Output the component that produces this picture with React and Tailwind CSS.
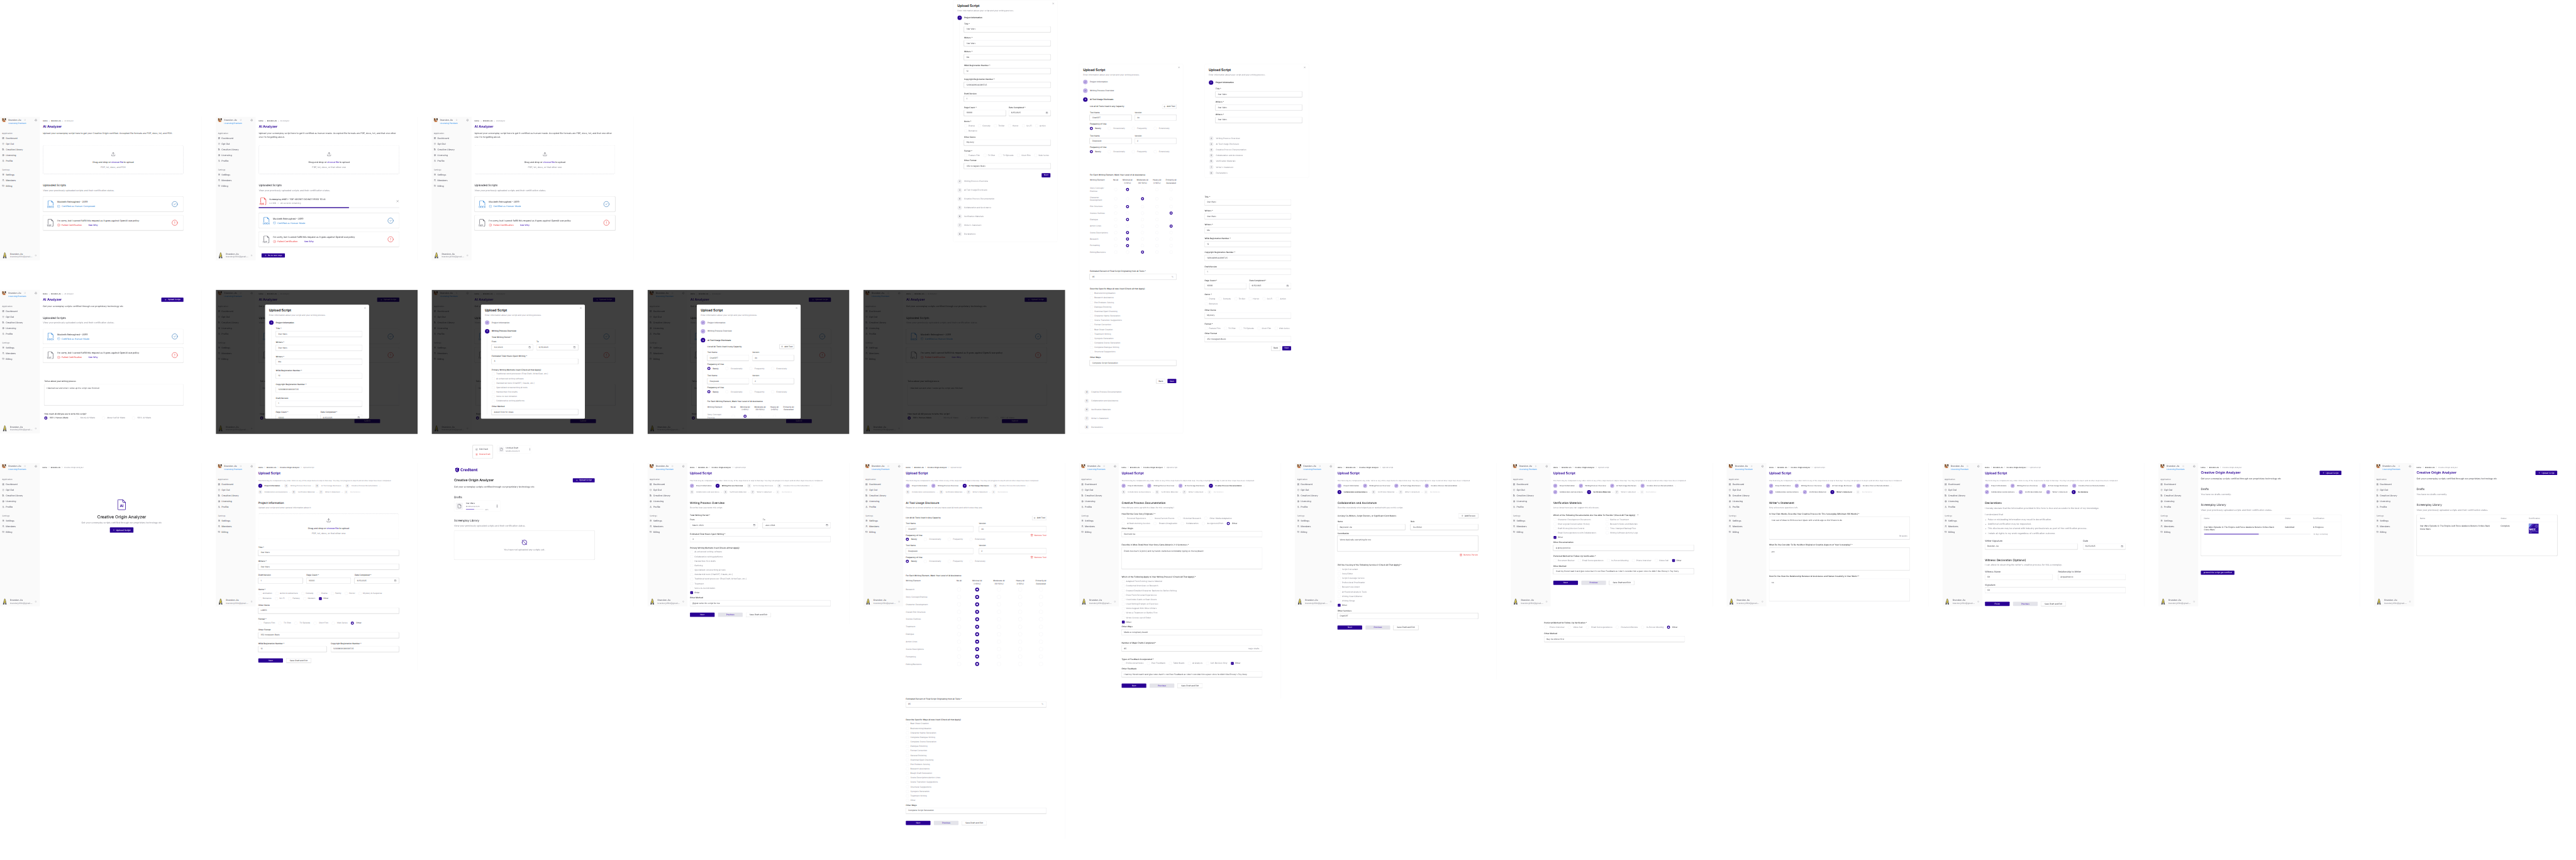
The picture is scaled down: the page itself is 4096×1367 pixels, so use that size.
import React from "react";
import {
  LayoutDashboard, ShieldCheck, LibraryBig, CircleDollarSign, UserPen, Settings, Users, CreditCard,
  Bell, ChevronsUpDown, ChevronRight, Plus, X, Check, Calendar, Trash2, SquarePen, File, EllipsisVertical,
  CircleCheck, CircleAlert, CircleSlash2, Upload, BadgeCheck,
} from "lucide-react";
import { BsFiletypeDocx, BsFiletypePdf, BsFiletypeTxt } from "react-icons/bs";

/* ---------- primitives ---------- */

const Label = ({ children, className = "" }) => (
  <div className={"h-5 text-sm leading-5 font-medium text-[#27272a] whitespace-nowrap " + className}>{children}</div>
);

const Input = ({ value, icon, suffix }) => (
  <div className="mt-2 flex h-10 items-center justify-between rounded-md border border-[#e4e4e7] bg-white px-4 text-sm text-[#3f3f46] shadow-sm">
    <span className="whitespace-nowrap">{value}</span>
    {icon && <Calendar className="size-4 text-[#52525b]" />}
    {suffix && <span className="mr-1 text-[#85858f]">{suffix}</span>}
  </div>
);

const Field = ({ label, value, icon, suffix, className = "", plain }) => (
  <div className={"min-w-0 " + className}>
    <Label className={plain ? "font-normal!" : ""}>{label}</Label>
    <Input value={value} icon={icon} suffix={suffix} />
  </div>
);

const TextArea = ({ value, footer, className }) => (
  <div className={"flex flex-col justify-between rounded-md border border-[#e4e4e7] bg-white px-4 pt-4 pb-2.5 text-sm text-[#3f3f46] shadow-sm " + className}>
    <span>{value}</span>
    {footer && <span className="self-end text-[#85858f]">{footer}</span>}
  </div>
);

const Box = ({ children, on }) => (
  <div className="flex h-6 items-center">
    <span className={"ml-0.5 flex size-5 items-center justify-center rounded " + (on ? "bg-[#2a0094]" : "border border-[#e4e4e7] bg-white")}>
      {on && <Check className="size-3 text-white" strokeWidth={3} />}
    </span>
    <span className={"ml-2.5 text-sm whitespace-nowrap " + (on ? "text-[#3f3f46]" : "text-[#85858f]")}>{children}</span>
  </div>
);

const Dot = ({ on, big }) => (
  <span
    className={
      "block shrink-0 rounded-full bg-white " +
      (big ? "size-7 " : "size-[22px] ") +
      (on ? (big ? "border-8 border-[#2a0094]" : "border-[6px] border-[#2a0094]") : "border border-[#e4e4e7]")
    }
  />
);

const Radio = ({ children, on }) => (
  <div className="flex h-6 items-center gap-4">
    <Dot on={on} />
    <span className={"text-sm whitespace-nowrap " + (on ? "font-medium text-[#3f3f46]" : "text-[#85858f]")}>{children}</span>
  </div>
);

const Boxes = ({ items, className = "" }) => (
  <div className={"flex gap-6 " + className}>
    {items.map((t) => <Box key={t} on={t === "Other"}>{t}</Box>)}
  </div>
);

const Radios = ({ items, on = "Other", className = "gap-6" }) => (
  <div className={"flex " + className}>
    {items.map((t) => <Radio key={t} on={t === on}>{t}</Radio>)}
  </div>
);

const CheckList = ({ items, on, className = "" }) => (
  <div className={className}>
    {items.map((t) => (
      <div key={t} className="flex h-[32.1px] items-center"><Box on={t === on}>{t}</Box></div>
    ))}
  </div>
);

const Btn = ({ children, className = "", kind = "solid", plus }) => (
  <div
    className={
      "flex items-center justify-center gap-2 rounded text-sm whitespace-nowrap " +
      (kind === "solid" ? "bg-[#2a0094] text-white " : kind === "soft" ? "bg-[#e4e4ea] text-[#4a1fb8] " : "border border-[#ededf0] bg-white text-[#3f3f46] shadow ") +
      className
    }
  >
    {plus && <Plus className="size-4" />}
    {children}
  </div>
);

const Actions = ({ first = "Next", prev = true, className }) => (
  <div className={"flex gap-6 " + className}>
    <Btn className="h-[30px] w-44">{first}</Btn>
    {prev && <Btn kind="soft" className="h-[30px] w-44 font-medium">Previous</Btn>}
    <Btn kind="line" className="h-[30px] w-44 font-medium">Save Draft and Exit</Btn>
  </div>
);

/* ---------- avatars and logo ---------- */

const Dog = () => (
  <svg viewBox="0 0 28 28" className="size-[28px] rounded">
    <rect width="28" height="28" fill="#e9d9c6" />
    <path d="M0 0h9l3 9-6 12H0z" fill="#8a5a34" />
    <path d="M19 0h9v18l-7-6z" fill="#3d2d27" />
    <path d="M6 28c0-8 3-14 8-14s9 6 9 14z" fill="#c98a52" />
    <circle cx="10" cy="10" r="2" fill="#1d1716" /><circle cx="18" cy="10" r="2" fill="#1d1716" />
    <ellipse cx="14" cy="15" rx="3" ry="2.2" fill="#1d1716" />
    <path d="M11 20h7l-2 4h-4z" fill="#d8433f" />
  </svg>
);

const Banana = () => (
  <svg viewBox="0 0 30 42" className="h-[42px] w-[30px]">
    <path d="M13 1h4l1 5c5 6 5 16 1 24l-9 1c-2-6 1-9 0-15-1-5 2-10 3-10z" fill="#f5dc2e" stroke="#222" strokeWidth="2" />
    <path d="M13 12h6v5h-6z" fill="#fff" stroke="#222" />
    <path d="M10 20l-6 5 3 5M19 20l6 5-3 5" fill="none" stroke="#333" strokeWidth="2.5" />
    <path d="M4 31h8v10H2v-4zM18 31h8l2 10H18z" fill="#444" />
  </svg>
);

const Shield = () => (
  <svg viewBox="0 0 30 34" className="h-[34px] w-[30px]">
    <path d="M15 0l14 5v12c0 8-6 14-14 17C7 31 1 25 1 17V5z" fill="#2a0094" />
    <path d="M20 11a7 7 0 1 0 0 11" fill="none" stroke="#fff" strokeWidth="3.4" />
  </svg>
);

/* ---------- sidebar ---------- */

const NavItem = ({ icon: Icon, children }) => (
  <div className="flex h-[40.2px] items-center gap-2.5 text-base font-medium text-[#5f5f6b]">
    <Icon className="size-4" />
    {children}
  </div>
);

const Sidebar = () => (
  <div className="flex h-[1024px] w-[284px] shrink-0 flex-col bg-[#fafafa] px-[15px] pt-[9px] pb-[14px]">
    <div className="flex items-start">
      <Dog />
      <div className="ml-4">
        <div className="mt-0.5 flex h-6 items-center text-base font-medium text-[#5f5f6b]">
          Brandon Jia <ChevronsUpDown className="ml-5 size-4 text-[#85858f]" />
        </div>
        <div className="h-5 text-sm leading-5 font-medium text-[#2b8ff0]">Licensing Premium</div>
      </div>
      <Bell className="mt-1.5 mr-1 ml-auto size-[18px] text-[#52525b]" />
    </div>
    <div className="mt-[52px] h-5 text-sm leading-5 text-[#71717a]">Application</div>
    <div className="mt-1.5">
      <NavItem icon={LayoutDashboard}>Dashboard</NavItem>
      <NavItem icon={ShieldCheck}>Opt Out</NavItem>
      <NavItem icon={LibraryBig}>Creative Library</NavItem>
      <NavItem icon={CircleDollarSign}>Licensing</NavItem>
      <NavItem icon={UserPen}>Profile</NavItem>
    </div>
    <div className="mt-[33px] h-5 text-sm leading-5 text-[#71717a]">Settings</div>
    <div className="mt-[5px]">
      <NavItem icon={Settings}>Settings</NavItem>
      <NavItem icon={Users}>Members</NavItem>
      <NavItem icon={CreditCard}>Billing</NavItem>
    </div>
    <div className="mt-auto flex items-center pl-1">
      <Banana />
      <div className="ml-[23px]">
        <div className="h-[21px] text-base leading-[21px] font-medium text-[#5f5f6b]">Brandon Jia</div>
        <div className="h-5 text-sm leading-5 text-[#85858f]">brandonj4564@gmail....</div>
      </div>
      <ChevronsUpDown className="mr-1.5 ml-auto size-4 text-[#71717a]" />
    </div>
  </div>
);

/* ---------- frame shells ---------- */

const Crumbs = ({ items }) => (
  <div className="flex h-4 items-center gap-1.5 text-xs leading-4">
    {items.map((t, i) => (
      <React.Fragment key={t}>
        {i > 0 && <ChevronRight className="size-3.5 text-[#71717a]" />}
        <span className={i === items.length - 1 ? "text-[#85858f]" : "font-medium text-[#27272a]"}>{t}</span>
      </React.Fragment>
    ))}
  </div>
);

const Frame = ({ children, className = "h-[1024px]", pad = "w-[1022px] pl-[19px]" }) => (
  <div className={"flex w-[1440px] items-start border-r border-[#ececef] bg-white " + className}>
    <Sidebar />
    <div className={"pt-[23px] " + pad}>{children}</div>
  </div>
);

const STEPS = [
  "Project Information", "Writing Process Overview", "AI Tool Usage Disclosure", "Creative Process Documentation",
  "Collaboration and Assistance", "Verification Materials", "Writer's Statement", "Declarations",
];

const StepDot = ({ n, cur, size = "size-8 text-sm" }) => (
  <span
    className={
      "flex shrink-0 items-center justify-center rounded-full font-medium " + size + " " +
      (n < cur ? "bg-[#bfaee6] text-[#2a0094]" : n === cur ? "bg-[#2a0094] text-white" : "bg-[#f0f0f2] text-[#52525b]")
    }
  >
    {n < cur ? <Check className="size-4" strokeWidth={2.5} /> : n}
  </span>
);

const stepText = (n, cur) => (n < cur ? "font-medium text-[#52525b]" : n === cur ? "font-semibold text-[#18181b]" : "text-[#85858f]");

const Stepper = ({ cur }) => (
  <div className="mt-4 flex flex-col gap-[17px]">
    {[[1, 2, 3, 4], [5, 6, 7, 8]].map((row) => (
      <div key={row[0]} className="flex h-7 items-center text-xs">
        {row.map((n) => (
          <div key={n} className={"flex items-center " + (n === 8 && cur < 8 ? "opacity-50" : "")}>
            <StepDot n={n} cur={cur} size="size-7 text-xs" />
            <span className={"ml-4 whitespace-nowrap " + stepText(n, cur)}>{STEPS[n - 1]}</span>
            {n < 8 && <span className="mr-[9px] ml-[11px] h-px w-2.5 bg-[#c9c9d0]" />}
          </div>
        ))}
      </div>
    ))}
  </div>
);

const StepFrame = ({ cur, sub, children, className, title, big }) => (
  <Frame className={className}>
    <Crumbs items={["Home", "Brandon Jia", "Creative Origin Analyzer", "Upload Script"]} />
    <div className="mt-5 h-8 text-2xl leading-8 font-semibold text-[#2a0094]">Upload Script</div>
    <div className="mt-[26px] h-4 text-xs leading-4 whitespace-nowrap text-[#85858f]">
      This form may be completed in any order. Click on any of the steps below to skip to that step. You may not progress to step 8 until all other steps have been completed.
    </div>
    <Stepper cur={cur} />
    <div className="mt-[49px] h-7 text-xl leading-7 font-medium text-[#27272a]">{title || STEPS[cur - 1]}</div>
    <div className={"mt-[11px] h-5 leading-5 whitespace-nowrap text-[#85858f] " + (big ? "text-base" : "text-sm")}>{sub}</div>
    {children}
  </Frame>
);

/* ---------- AI Analyzer frames ---------- */

const DropZone = ({ hint, className }) => (
  <div className={"flex flex-col items-center rounded-lg border-2 border-dashed border-[#d0d0d6] " + className}>
    <Upload className="size-8 text-[#52525b]" strokeWidth={1.75} />
    <div className="mt-[26px] h-6 text-base leading-6 font-medium text-[#3f3f46]">
      Drag and drop or <span className="text-[#4a1fb8]">choose file</span> to upload
    </div>
    <div className="mt-3 h-6 text-base leading-6 text-[#85858f]">{hint}</div>
  </div>
);

const ScriptCard = ({ icon: Icon, color, name, ok, status, className = "" }) => (
  <div className={"flex h-[107px] items-center rounded-lg border border-[#ececef] bg-white pr-[38px] pl-[27px] shadow " + className}>
    <Icon className={"size-[54px] shrink-0 " + color} />
    <div className="ml-5">
      <div className="h-6 text-base leading-6 font-medium text-[#3f3f46]">{name}</div>
      <div className={"mt-2 flex h-6 items-center gap-2.5 text-base font-medium " + (ok ? "text-[#4a94dc]" : "text-[#ee4d4d]")}>
        {ok ? <BadgeCheck className="size-[22px]" /> : <CircleAlert className="size-[22px]" />}
        {status}
        {!ok && <span className="ml-9 text-[#4a1fb8]">See Why</span>}
      </div>
    </div>
    {ok ? <CircleCheck className="ml-auto size-[46px] text-[#3f80bd]" strokeWidth={1.6} /> : <CircleAlert className="ml-auto size-[46px] text-[#ee4d4d]" strokeWidth={1.6} />}
  </div>
);

const TwoCards = ({ made, className }) => (
  <div className={className}>
    <ScriptCard icon={BsFiletypeDocx} color="text-[#4a94dc]" name="Macbeth Reimagined - 2099" ok status={made} />
    <ScriptCard icon={BsFiletypeTxt} color="text-[#71717a]" name="I'm sorry, but I cannot fulfill this request as it goes against OpenAI use policy" status="Failed Certification" className="mt-[26px]" />
  </div>
);

const AnalyzerHead = ({ desc, hint }) => (
  <>
    <Crumbs items={["Home", "Brandon Jia", "AI Analyzer"]} />
    <div className="mt-4 h-8 text-2xl leading-8 font-semibold text-[#2a0094]">AI Analyzer</div>
    <div className="mt-5 h-[96px] text-base leading-6 text-[#3f3f46]">{desc}</div>
    <DropZone hint={hint} className="h-[206px] pt-[46px]" />
    <div className="mt-[66px] h-7 text-xl leading-7 font-medium text-[#3f3f46]">Uploaded Scripts</div>
    <div className="mt-[10px] h-6 text-base leading-6 text-[#85858f]">View your previously uploaded scripts and their certification status.</div>
  </>
);

const LONG = "Upload your screenplay script here to get it certified as human-made. Accepted file formats are PDF, docx, txt, and that one other one I'm forgetting about.";
const WIDE = "w-[1025px] pl-[22px]";

const AnalyzerFirst = () => (
  <Frame pad={WIDE}>
    <AnalyzerHead desc="Upload your screenplay script here to get your Creative Origin certified. Accepted file formats are PDF, docx, txt, and FDX." hint="PDF, txt, docx, and FDX" />
    <TwoCards made="Certified as Human-Composed" className="mt-8" />
  </Frame>
);

const AnalyzerUploading = () => (
  <Frame pad={WIDE}>
    <AnalyzerHead desc={LONG} hint="PDF, txt, docx, or that other one" />
    <div className="mt-8 flex h-[66px] items-center pl-1.5">
      <BsFiletypePdf className="size-[54px] text-[#ee4d4d]" />
      <div className="ml-4">
        <div className="h-6 text-base leading-6 font-medium text-[#3f3f46]">Screenplay #401 - TOP SECRET DO NOT FEED TO AI</div>
        <div className="mt-2 h-5 text-sm leading-5 text-[#85858f]">2.3 MB &nbsp;&nbsp;•&nbsp;&nbsp; 28 seconds remaining</div>
      </div>
      <X className="ml-auto size-6 text-[#71717a]" />
    </div>
    <div className="mt-2.5 h-1.5 bg-[#f0f0f2]"><div className="h-full w-[644px] bg-[#2a0094]" /></div>
    <TwoCards made="Certified as Human-Made" className="mt-9" />
    <Btn plus className="mt-[47px] ml-5 h-[30px] w-[167px]">Go to next step</Btn>
  </Frame>
);

const AnalyzerThird = () => (
  <Frame pad={WIDE}>
    <AnalyzerHead desc={LONG} hint="PDF, txt, docx, or that other one" />
    <TwoCards made="Certified as Human-Made" className="mt-8" />
  </Frame>
);

const AnalyzerQuestions = ({ submit }) => (
  <Frame pad={WIDE}>
    <Crumbs items={["Home", "Brandon Jia", "AI Analyzer"]} />
    <div className="mt-4 flex h-8 items-center justify-between text-2xl font-semibold text-[#2a0094]">
      AI Analyzer <Btn plus className="h-[30px] w-[158px] font-normal">Upload Script</Btn>
    </div>
    <div className="mt-4 h-6 text-base leading-6 text-[#3f3f46]">Get your screenplay scripts certified through our proprietary technology etc</div>
    <div className="mt-[59px] h-7 text-xl leading-7 font-medium text-[#3f3f46]">Uploaded Scripts</div>
    <div className="mt-[9px] h-6 text-base leading-6 text-[#85858f]">View your previously uploaded scripts and their certification status.</div>
    <TwoCards made="Certified as Human-Made" className="mt-8" />
    <div className="ml-[10px]">
      <Label className="mt-[124px]">Tell us about your writing process</Label>
      <TextArea value="I blacked out and when I woke up the script was finished" className="mt-[11px] h-[150px]" />
      <Label className="mt-[51px]">How much AI did you use to write this script?</Label>
      <Radios className="mt-2 gap-12" on="100% Human-Made" items={["100% Human-Made", "Mostly AI-Made", "About half AI-Made", "100% AI-Made"]} />
      {submit && <Btn className="-mt-1 ml-[673px] h-7 w-[183px]">Submit</Btn>}
    </div>
  </Frame>
);

const Dimmed = ({ children }) => (
  <div className="relative h-[1028px] w-[1440px] overflow-hidden">
    <AnalyzerQuestions submit />
    <div className="absolute inset-0 bg-black/75">{children}</div>
  </div>
);

const Modal = ({ children }) => (
  <div className="mt-[105px] ml-[350px] h-[814px] w-[744px] overflow-hidden rounded-lg">{children}</div>
);

/* ---------- script panels ---------- */

const Panel = ({ children, className = "" }) => (
  <div className={"w-[744px] rounded-lg border border-[#ececef] bg-white pr-[49px] pl-[29px] " + className}>
    <div className="flex h-[57px] items-end justify-between">
      <span className="text-2xl leading-8 font-semibold text-[#09090b]">Upload Script</span>
      <X className="-mr-7 mb-[25px] size-4 text-[#52525b]" />
    </div>
    <div className="mt-[10px] h-5 text-sm leading-5 text-[#85858f]">Enter information about your script and your writing process.</div>
    {children}
  </div>
);

const StepHead = ({ n, cur, className = "", small }) => (
  <div className={"flex items-center text-sm " + (small ? "h-[30px] gap-[18px] " : "h-8 gap-4 ") + className}>
    <StepDot n={n} cur={cur} size={small ? "size-[30px] text-sm" : "size-8 text-sm"} />
    <span className={stepText(n, cur)}>{STEPS[n - 1]}</span>
  </div>
);

const Link = () => <div className="ml-[15px] h-[30.3px] py-2"><div className="h-full w-0.5 bg-[#f0f0f2]" /></div>;

const StepTail = ({ from, cur, className = "" }) => (
  <div className={className}>
    {STEPS.map((_, i) => i + 1).filter((n) => n >= from).map((n) => (
      <div key={n}>
        {n > from && <Link />}
        <StepHead n={n} cur={cur} />
      </div>
    ))}
  </div>
);

const Body = ({ children, className = "" }) => (
  <div className="flex">
    <div className="mt-2 ml-[15px] w-0.5 bg-[#f0f0f2]" />
    <div className={"ml-[31px] w-[617px] " + className}>{children}</div>
  </div>
);

const ProjectTop = () => (
  <>
    <Field label="Title *" value="Star Wars" />
    <Field label="Writers *" value="Star Wars" className="mt-[31.3px]" />
    <Field label="Writers *" value="Me" className="mt-[31.3px]" />
    <Field label="WGA Registration Number *" value="12" className="mt-[31.3px]" />
    <Field label="Copyright Registration Number *" value="120938091283091725" className="mt-[31.3px]" />
    <Field label="Draft/Version" value="1" className="mt-[31.3px]" />
    <div className="mt-[31.3px] grid grid-cols-2 gap-[22px]">
      <Field label="Page Count *" value="10000" />
      <Field label="Date Completed *" value="6/15/2025" icon />
    </div>
  </>
);

const ProjectForm = ({ back }) => (
  <>
    <ProjectTop />
    <Label className="mt-[31px]">Genre *</Label>
    <Boxes className="mt-[9px]" items={["Drama", "Comedy", "Thriller", "Horror", "Sci-Fi", "Action"]} />
    <Boxes className="mt-3" items={["Romance"]} />
    <Field label="Other Genre" value="Mystery" className="mt-[23px]" />
    <Label className="mt-8">Format *</Label>
    <Boxes className="mt-2" items={["Feature Film", "TV Pilot", "TV Episode", "Short Film", "Web Series"]} />
    <Field label="Other Format" value="352 Instagram Reels" className="mt-4" />
    <div className="mt-[31px] flex justify-end gap-4">
      {back && <Btn kind="line" className="h-[30px] w-[60px] font-medium">Back</Btn>}
      <Btn className="h-[30px] w-[63px]">Next</Btn>
    </div>
  </>
);

const ProjectPanel = () => (
  <Panel className="h-[1726px]">
    <StepHead n={1} cur={1} className="mt-[23px]" />
    <Body className="pt-[18px] pb-[14px]"><ProjectForm /></Body>
    <StepTail from={2} cur={1} />
  </Panel>
);

const ProjectModal = () => (
  <Panel className="h-[860px]">
    <StepHead n={1} cur={1} className="mt-[25px]" />
    <Body className="pt-[17px]"><ProjectTop /></Body>
  </Panel>
);

const WritingModal = () => (
  <Panel className="h-[860px]">
    <StepHead n={1} cur={2} className="mt-[25px]" />
    <Link />
    <StepHead n={2} cur={2} />
    <Body className="pt-[18px]">
      <Label>Total Writing Period *</Label>
      <div className="mt-3 grid grid-cols-2 gap-6">
        <Field plain label="From" value="3/2/2023" icon />
        <Field plain label="To" value="6/15/2025" icon />
      </div>
      <Field label="Estimated Total Hours Spent Writing *" value="3" className="mt-8" />
      <Label className="mt-[31px]">Primary Writing Methods Used (Check all that Apply)</Label>
      <CheckList className="mt-1" items={["Traditional word processor (Final Draft, WriterDuet, etc.)", "AI-enhanced writing software", "Standard AI tools (ChatGPT, Claude, etc.)", "Specialized screenwriting AI tools", "Handwritten first drafts", "Voice-to-text dictation", "Collaborative writing platforms"]} />
      <Field label="Other Method" value="Asked Grok for ideas" className="mt-[13px]" />
    </Body>
  </Panel>
);

const HEADS = [["No AI"], ["Minimal AI", "(<10%)"], ["Moderate AI", "(10-50%)"], ["Heavy AI", "(>50%)"], ["Primarily AI", "Generated"]];

const Matrix = ({ cols, rows, rowClass, big, className }) => (
  <div className={className}>
    <div className={"grid h-[42px] text-sm leading-[21px] font-medium text-[#52525b] " + cols}>
      <span>Writing Element</span>
      {HEADS.map((h) => (
        <span key={h[0]} className="text-center whitespace-nowrap">{h.map((l) => <span key={l} className="block">{l}</span>)}</span>
      ))}
    </div>
    <div className="mt-1">
      {rows.map(([t, on]) => (
        <div key={t} className={"grid items-center text-sm leading-[21px] text-[#85858f] " + cols + " " + (!big && (t === "Story Concept/ Premise" || t === "Character Development") ? "h-[65.5px]" : rowClass)}>
          <span className={big ? "" : "w-[130px]"}>{t}</span>
          {[0, 1, 2, 3, 4].map((i) => <span key={i} className="flex justify-center"><Dot on={i === on} big={big} /></span>)}
        </div>
      ))}
    </div>
  </div>
);

const Remove = ({ children }) => (
  <div className="flex items-center gap-2 text-sm font-medium text-[#ee4d4d]"><Trash2 className="size-5" />{children}</div>
);

const Tool = ({ name, version, remove, cols, gap = "mt-4" }) => (
  <>
    <div className={"grid grid-cols-2 " + cols}>
      <Field plain label="Tool Name" value={name} />
      <Field plain label="Version" value={version} />
    </div>
    <div className={"flex h-5 items-center justify-between " + gap}>
      <Label>Frequency of Use</Label>
      {remove && <Remove>Remove Tool</Remove>}
    </div>
    <Radios className="mt-2 gap-12" on="Rarely" items={["Rarely", "Occasionally", "Frequently", "Extensively"]} />
  </>
);

const ToolTop = ({ space, rows }) => (
  <>
    <div className="mb-4 flex h-8 items-center justify-between">
      <Label>List all AI Tools Used in any Capacity</Label>
      <Btn kind="line" plus className="h-[30px] w-[100px] font-medium">Add Tool</Btn>
    </div>
    <Tool name="ChatGPT" version="4o" cols="gap-6" />
    <div className="h-[30px]" />
    <Tool name="Deepseek" version="2" cols="gap-6" />
    <Label className={space}>For Each Writing Element, Mark Your Level of AI Assistance</Label>
    <Matrix className="mt-[17px]" cols="grid-cols-[145px_79px_90px_124px_82px_119px]" rowClass="h-[46.3px]" rows={rows} />
  </>
);

const ToolSteps = () => (
  <>
    <StepHead n={1} cur={3} className="mt-[25px]" />
    <Link />
    <StepHead n={2} cur={3} />
    <Link />
    <StepHead n={3} cur={3} />
  </>
);

const ToolModal = () => (
  <Panel className="h-[860px]">
    <ToolSteps />
    <Body className="pt-[14px]"><ToolTop space="mt-12" rows={[["Story Concept/ Premise", 1]]} /></Body>
  </Panel>
);

const ToolPanel = () => (
  <Panel className="h-[2635px]">
    <ToolSteps />
    <div className="ml-12 w-[617px] pt-[18px]">
      <ToolTop
        space="mt-[143px]"
        rows={[["Story Concept/ Premise", 1], ["Character Development", 2], ["Plot Structure", 1], ["Scenes Outlines", 4], ["Dialogue", 1], ["Action Lines", 4], ["Scene Descriptions", 1], ["Research", 1], ["Formatting", 1], ["Editing/Revisions", 2]]}
      />
      <Field label="Estimated Percent of Final Script Originating from AI Tools *" value="95" suffix="%" className="mt-[105px]" />
      <Label className="mt-[58px]">Describe Specific Ways AI was Used (Check all that Apply)</Label>
      <CheckList className="mt-[5px]" items={["Brainstorming/Ideation", "Research Assistance", "Plot Problem-Solving", "Dialogue Polishing", "Grammar/Spell Checking", "Character Name Generation", "Scene Transition Suggestions", "Format Correction", "Beat Sheet Creation", "Treatment Writing", "Synopsis Generation", "Complete Scene Generation", "Complete Dialogue Writing", "Structural Suggestions"]} />
      <Field label="Other Ways" value="Complete Script Generation" className="mt-[14px]" />
      <div className="mt-[95px] flex justify-end gap-4">
        <Btn kind="line" className="h-[30px] w-[62px] font-medium">Back</Btn>
        <Btn className="h-[30px] w-[63px]">Next</Btn>
      </div>
    </div>
    <StepTail from={4} cur={3} className="mt-12 ml-[10px]" />
  </Panel>
);

const ShortPanel = () => (
  <Panel className="h-[813px]">
    <StepHead n={1} cur={1} className="mt-[29px]" />
    <div className="ml-12 w-[617px]">
      <Field label="Title *" value="Star Wars" className="mt-[19px]" />
      <Field label="Writers *" value="Star Wars" className="mt-[27px]" />
      <Field label="Writers *" value="Star Wars" className="mt-5" />
    </div>
    <div className="mt-[97px] ml-[3px] flex flex-col gap-[11px]">
      {[2, 3, 4, 5, 6, 7, 8].map((n) => <StepHead key={n} n={n} cur={1} small />)}
    </div>
  </Panel>
);

/* ---------- step frames ---------- */

const Welcome = () => (
  <Frame>
    <Crumbs items={["Home", "Brandon Jia", "Creative Origin Analyzer"]} />
    <div className="-ml-[7px] flex w-[1144px] flex-col items-center pt-[221px]">
      <svg viewBox="0 0 60 76" className="h-[76px] w-[60px]" fill="none" stroke="#2a0094" strokeWidth="4">
        <path d="M38 2H8a6 6 0 0 0-6 6v60a6 6 0 0 0 6 6h44a6 6 0 0 0 6-6V22zM38 2v14a6 6 0 0 0 6 6h14" />
        <text x="30" y="54" textAnchor="middle" stroke="none" fill="#2a0094" className="font-['Inter'] text-[27px] font-semibold">AI</text>
      </svg>
      <div className="mt-[30px] h-9 text-[30px] leading-9 font-medium text-[#18181b]">Creative Origin Analyzer</div>
      <div className="mt-[13px] h-6 text-base leading-6 text-[#85858f]">Get your screenplay scripts certified through our proprietary technology etc</div>
      <Btn plus className="mt-[21px] h-[38px] w-[168px] text-base!">Upload Script</Btn>
    </div>
  </Frame>
);

const StepProject = () => (
  <StepFrame cur={1} sub="Upload your script and enter general information about it" className="h-[1480px]">
    <DropZone hint="PDF, txt, docx, or that other one" className="mt-[31px] h-[183px] pt-[31px]" />
    <Field label="Title *" value="Star Wars" className="mt-12" />
    <Field label="Writers *" value="Star Wars" className="mt-8" />
    <div className="mt-8 grid grid-cols-3 gap-7">
      <Field label="Draft/Version" value="1" />
      <Field label="Page Count *" value="10000" />
      <Field label="Date Completed *" value="6/15/2025" icon />
    </div>
    <Label className="mt-[31px]">Genre *</Label>
    <Boxes className="mt-2" items={["Animation", "Action & Adventure", "Comedy", "Drama", "Family", "Horror", "Mystery & Suspense"]} />
    <Boxes className="mt-[13px]" items={["Romance", "Sci-Fi", "Fantasy", "Western", "Other"]} />
    <Field label="Other Genre" value="LitRPG" className="mt-[25px]" />
    <Label className="mt-[31px]">Format *</Label>
    <Radios className="mt-[7px] gap-6" items={["Feature Film", "TV Pilot", "TV Episode", "Short Film", "Web Series", "Other"]} />
    <Field label="Other Format" value="352 Instagram Reels" className="mt-[25px]" />
    <div className="mt-[31px] grid grid-cols-2 gap-8">
      <Field label="WGA Registration Number *" value="12" />
      <Field label="Copyright Registration Number *" value="120938091283091725" />
    </div>
    <Actions prev={false} className="mt-[47px]" />
  </StepFrame>
);

const StepWriting = () => (
  <StepFrame cur={2} sub="Describe how you wrote this script." className="h-[1150px]">
    <Label className="mt-[33px]">Total Writing Period *</Label>
    <div className="mt-[13px] grid grid-cols-2 gap-9">
      <Field plain label="From" value="March 2023" icon />
      <Field plain label="To" value="June 2024" icon />
    </div>
    <Field label="Estimated Total Hours Spent Writing *" value="3" className="mt-8" />
    <Label className="mt-[31px]">Primary Writing Methods Used (Check all that Apply)</Label>
    <CheckList className="mt-[5px]" on="Other" items={["AI-enhanced writing software", "Collaborative writing platforms", "Handwritten first drafts", "Outlining", "Specialized screenwriting AI tools", "Standard AI tools (ChatGPT, Claude, etc.)", "Traditional word processor (Final Draft, WriterDuet, etc.)", "Treatment", "Voice-to-text dictation", "Other"]} />
    <Field label="Other Method" value="@grok write this script for me" className="mt-3" />
    <Actions className="mt-[47px]" />
  </StepFrame>
);

const StepTools = () => (
  <StepFrame cur={3} sub="Please let us know whether or not you have used AI tools and which ones they are." className="h-[2680px]">
    <div className="mt-[46px] mb-4 flex h-8 items-center justify-between">
      <Label>List All AI Tools Used in Any Capacity</Label>
      <Btn kind="line" plus className="h-[30px] w-[100px] font-medium">Add Tool</Btn>
    </div>
    <Tool name="ChatGPT" version="4o" cols="gap-10" gap="mt-[13px]" remove />
    <div className="h-6" />
    <Tool name="Deepseek" version="2" cols="gap-10" gap="mt-[13px]" remove />
    <Label className="mt-20">For Each Writing Element, Mark Your Level of AI Assistance</Label>
    <Matrix
      big
      className="mt-4"
      cols="grid-cols-[322px_116px_142px_170px_132px_164px]"
      rowClass="h-[53.2px]"
      rows={["Research", "Story Concept/Premise", "Character Development", "Overall Plot Structure", "Scenes Outlines", "Treatment", "Dialogue", "Action Lines", "Scene Descriptions", "Formatting", "Editing/Revisions"].map((t) => [t, 1])}
    />
    <Field label="Estimated Percent of Final Script Originating from AI Tools *" value="95" suffix="%" className="mt-[213px]" />
    <Label className="mt-[79px]">Describe Specific Ways AI was Used (Check all that Apply)</Label>
    <CheckList className="mt-1" items={["Beat Sheet Creation", "Brainstorming/Ideation", "Character Name Generation", "Complete Dialogue Writing", "Complete Scene Generation", "Dialogue Polishing", "Format Correction", "General Polishing", "Grammar/Spell Checking", "Plot Problem-Solving", "Research Assistance", "Rough Draft Generation", "Scene Descriptions/Action Lines", "Scene Transition Suggestions", "Structural Suggestions", "Synopsis Generation", "Treatment Writing"]} />
    <div className="flex h-[32.1px] items-center">
      <span className="ml-0.5 size-5 rounded border border-[#e4e4e7]" />
      <span className="ml-2.5 text-sm text-[#85858f]">Other</span>
    </div>
    <Field label="Other Ways" value="Complete Script Generation" className="mt-[9px]" />
    <Actions className="mt-[53px]" />
  </StepFrame>
);

const FRIEND = "I had my friend read it and give notes but it's not Peer Feedback as I don't consider him a peer since he didn't like Disney's Toy Story";

const StepCreative = () => (
  <StepFrame cur={4} sub="How did you come up with the ideas for this screenplay?" className="h-[1680px]">
    <Label className="mt-[26px]">How Did the Core Story Originate? *</Label>
    <Radios className="mt-1.5 gap-6" items={["Personal Experience", "News/Current Events", "Historical Research", "Other Media Adaptation"]} />
    <Radios className="mt-[14px] gap-6" items={["AI Brainstorming Session", "Dreams/Imagination", "Collaboration", "Assignment/Pitch", "Other"]} />
    <Field label="Other Origin" value="God told me" className="mt-4" />
    <Label className="mt-[47px]">Describe in More Detail How Your Story Came About in 2-3 Sentences *</Label>
    <TextArea value="Drank too much (2 pints) and my hands started uncontrollably typing on the keyboard" className="mt-2 h-[152px]" />
    <Label className="mt-[50px]">Which of the Following Apply to Your Writing Process? (Check All That Apply) *</Label>
    <CheckList className="mt-[5px]" on="Other" items={["Adapted From Existing Source Material", "Conducted Interviews or Research", "Created Detailed Character Backstories Before Writing", "Drew From Personal Experiences", "Used Index Cards or Beat Sheets", "Used Writing Prompts or Exercises", "Workshopped With Other Writers", "Wrote a Treatment or Outline First", "Wrote Scenes out of Order", "Other"]} />
    <Field label="Other Ways" value="Made a conspiracy board" className="mt-[9px]" />
    <Field label="Number of Major Drafts Completed *" value="95" suffix="major drafts" className="mt-[47px]" />
    <Label className="mt-[47px]">Types of Feedback Incorporated *</Label>
    <Boxes className="mt-2" items={["Professional Notes", "Peer Feedback", "Table Reads", "AI Analysis", "Self-Revision Only", "Other"]} />
    <Field label="Other Feedback" value={FRIEND} className="mt-[17px]" />
    <Actions className="mt-[47px]" />
  </StepFrame>
);

const StepCollab = () => (
  <StepFrame cur={5} sub="Describe everybody who helped you or worked with you on this script." className="h-[1544px]">
    <div className="mt-[31px] mb-4 flex h-8 items-center justify-between">
      <Label>List Any Co-Writers, Script Doctors, or Significant Contributors</Label>
      <Btn kind="line" plus className="h-[30px] w-[139px] font-medium">Add Person</Btn>
    </div>
    <div className="grid grid-cols-2 gap-10">
      <Field plain label="Name" value="Raymond Jia" />
      <Field plain label="Role" value="Co-Writer" />
    </div>
    <Label className="mt-[15px]">Contribution</Label>
    <TextArea value="Wrote basically everything for me" className="mt-2 h-[109px]" />
    <div className="mt-[18px] flex h-5 items-center justify-end"><Remove>Remove Person</Remove></div>
    <Label className="mt-[51px]">Did You Use Any of the Following Services? (Check All That Apply) *</Label>
    <CheckList className="mt-1" on="Other" items={["Script Consultant", "Story Editor", "Script Coverage Service", "Professional Proofreader", "Research Assistant", "AI-Powered Analysis Tools", "Writing Coach/Mentor", "Writing Group", "Other"]} />
    <Field label="Other Services" value="ChatGPT" className="mt-[13px]" />
    <Actions className="mt-[47px]" />
  </StepFrame>
);

const StepVerify = () => (
  <StepFrame cur={6} sub="Let us know how you can support this disclosure.">
    <Label className="mt-[33px]">Which of the Following Documentation Are You Able To Provide? (Check All That Apply) &nbsp; &nbsp;*</Label>
    <div className="mt-1 flex">
      <CheckList className="w-[372px]" on="Other" items={["Character Development Documents", "Chat Logs/AI Conversation History", "Draft History/Version Control", "Email Correspondence with Collaborators", "Other"]} />
      <CheckList items={["Outline or Treatment", "Research Notes and Materials", "Time-Stamped Backup Files", "Writing Software Activity Logs"]} />
    </div>
    <Field label="Other Documentation" value="A pinky promise" className="mt-[10px]" />
    <Label className="mt-[31px]">Preferred Method for Follow-Up Verification *</Label>
    <Boxes className="mt-2" items={["Document Review", "Email Correspondence", "In-Person Meeting", "Phone Interview", "Video Call", "Other"]} />
    <Field label="Other Method" value={FRIEND} className="mt-[17px]" />
    <Actions className="mt-[47px]" />
  </StepFrame>
);

const VerifyLoose = () => (
  <div className="w-[1003px]">
    <Label>Preferred Method for Follow-Up Verification *</Label>
    <Radios className="mt-2 gap-6" items={["Phone Interview", "Video Call", "Email Correspondence", "Document Review", "In-Person Meeting", "Other"]} />
    <Field label="Other Method" value="Buy me dinner first" className="mt-6" />
  </div>
);

const StepStatement = () => (
  <StepFrame cur={7} sub="Only a few more questions left.">
    <Label className="mt-[25px]">In Your Own Words, Describe Your Creative Process for This Screenplay (Minimum 100 Words) *</Label>
    <TextArea value="I ran out of ideas to fill these text inputs with a while ago so this'll have to do" footer="19 words" className="mt-[9px] h-40" />
    <Label className="mt-8">What Do You Consider To Be the Most Original or Creative Aspects of Your Screenplay? *</Label>
    <TextArea value="yes" className="mt-[9px] h-40" />
    <Label className="mt-8">How Do You View the Relationship Between AI Assistance and Human Creativity in Your Work? *</Label>
    <TextArea value="no" className="mt-[9px] h-40" />
  </StepFrame>
);

const BigField = ({ label, value, icon, className = "" }) => (
  <div className={className}>
    <div className="mb-px h-5 text-base leading-5 font-medium whitespace-nowrap text-[#52525b]">{label}</div>
    <Input value={value} icon={icon} />
  </div>
);

const StepDeclare = () => (
  <StepFrame cur={8} big sub="I hereby declare that the information provided in this form is true and accurate to the best of my knowledge.">
    <div className="mt-[29px] h-5 text-base leading-5 text-[#85858f]">I understand that</div>
    <ul className="mt-[9px] list-disc pl-5 text-base text-[#85858f]">
      {["False or misleading information may result in decertification.", "Additional verification may be requested.", "This disclosure may be shared with industry professionals as part of the certification process.", "I retain all rights to my work regardless of certification outcome."].map((t) => (
        <li key={t} className="h-[32.2px] leading-8">{t}</li>
      ))}
    </ul>
    <div className="mt-[30px] flex gap-10">
      <BigField label="Writer Signature" value="Brandon Jia" className="w-[660px]" />
      <BigField label="Date" value="6/25/2025" icon className="flex-1" />
    </div>
    <div className="mt-[63px] h-7 text-xl leading-7 font-medium text-[#27272a]">Witness Declaration (Optional)</div>
    <div className="mt-3 h-5 text-base leading-5 text-[#85858f]">I can attest to observing the writer's creative process for this screenplay.</div>
    <div className="mt-7 grid grid-cols-2 gap-10">
      <BigField label="Witness Name" value="CK" />
      <BigField label="Relationship to Writer" value="Acquaintance" />
    </div>
    <BigField label="Signature" value="CK" className="mt-[26px]" />
    <Actions first="Finish" className="mt-[62px]" />
  </StepFrame>
);

/* ---------- library frames ---------- */

const Library = ({ status, cert, extra, done }) => (
  <Frame>
    <Crumbs items={["Home", "Brandon Jia", "Creative Origin Analyzer"]} />
    <div className="mt-4 flex h-8 items-center justify-between text-2xl font-semibold text-[#2a0094]">
      Creative Origin Analyzer <Btn plus className="h-[30px] w-[155px] font-normal">Upload Script</Btn>
    </div>
    <div className="mt-[13px] h-6 text-base leading-6 text-[#3f3f46]">Get your screenplay scripts certified through our proprietary technology etc</div>
    <div className="mt-[49px] h-7 text-xl leading-7 font-medium text-[#3f3f46]">Drafts</div>
    <div className="mt-[10px] h-6 text-base leading-6 text-[#85858f]">You have no drafts currently.</div>
    <div className="mt-[49px] h-7 text-xl leading-7 font-medium text-[#3f3f46]">Screenplay Library</div>
    <div className="mt-[10px] h-6 text-base leading-6 text-[#85858f]">View your previously uploaded scripts and their certification status.</div>
    <div className="mt-[23px] h-[293px] rounded-lg border border-[#ececef] bg-white shadow">
      <div className="grid h-[52px] grid-cols-[577px_200px_200px] items-center border-b border-[#ececef] pl-[22px] text-sm text-[#85858f]">
        <span>Name</span><span>Status</span><span>Certification</span>
      </div>
      <div className={"grid grid-cols-[577px_200px_200px] pl-[22px] text-sm leading-[21px] font-medium text-[#3f3f46] " + (done ? "pt-[17px]" : "pt-6")}>
        <span>Star Wars Episode X: The Empire Jedi Force Awakens Returns Strikes Back<br />Clone Wars</span>
        <span>{status}</span>
        <span>{cert}</span>
      </div>
      {extra}
    </div>
    {!done && <Btn className="mt-[106px] h-[30px] w-60">pretend the script got certified</Btn>}
  </Frame>
);

const Submitted = () => (
  <Library
    status="Submitted"
    cert="In Progress"
    extra={
      <div className="mt-3 flex h-4 items-center gap-[17px] pl-[22px] text-xs text-[#85858f]">
        <div className="h-1 w-[760px] rounded bg-[#ececef]"><div className="h-full w-[391px] rounded bg-[#4a1fb8]" /></div>
        ~6 days remaining
      </div>
    }
  />
);

const Badge = () => (
  <div className="relative -mt-[5px] h-[70px] w-[70px] overflow-hidden bg-[#2f0d9e] text-white">
    <svg viewBox="0 0 70 70" className="absolute inset-0">
      <path d="M0 0h26L0 30z" fill="#7fa0ea" />
      <path d="M26 0h14L0 44V30z" fill="#4a2bb8" />
      <circle cx="55" cy="17" r="10" fill="none" stroke="#8f84dc" strokeWidth="2" />
      <circle cx="55" cy="17" r="5" fill="none" stroke="#8f84dc" strokeWidth="2" />
    </svg>
    <div className="relative pt-8 pl-1 text-[19px] leading-5 font-bold">MCC</div>
    <div className="relative pl-1 text-[5px] leading-[7px] whitespace-nowrap">Mostly human-composed<br />content</div>
  </div>
);

const Complete = () => <Library done status="Complete" cert={<Badge />} />;

const DraftsHome = () => (
  <div className="h-[1024px] w-[1440px] border-r border-[#ececef] bg-white pt-[33px] pl-[160px]">
    <div className="flex h-[34px] items-center pl-[7px]">
      <Shield />
      <span className="ml-2 font-['Open_Sans',sans-serif] text-[29px] font-bold tracking-tight text-[#2a0094]">Credtent</span>
    </div>
    <div className="w-[1003px]">
      <div className="mt-[41px] flex h-8 items-center justify-between text-2xl font-semibold text-[#18181b]">
        Creative Origin Analyzer <Btn plus className="h-[30px] w-[156px] font-normal">Upload Script</Btn>
      </div>
      <div className="mt-[18px] h-6 text-base leading-6 text-[#3f3f46]">Get your screenplay scripts certified through our proprietary technology etc</div>
      <div className="mt-12 h-7 text-xl leading-7 font-medium text-[#3f3f46]">Drafts</div>
      <div className="mt-[10px] flex h-20 w-[331px] items-center rounded-lg border border-[#ececef] pl-[11px]">
        <div className="flex h-[51px] w-[51px] items-center justify-center rounded-md bg-[#f4f4f6]"><File className="size-8 text-[#71717a]" /></div>
        <div className="ml-[21px] w-[161px]">
          <div className="text-sm leading-5 font-medium text-[#52525b]">Star Wars</div>
          <div className="mt-0.5 text-xs leading-5 text-[#85858f]">Modified 6/25/25</div>
          <div className="mt-1 flex h-4 items-center justify-between text-[11px] text-[#85858f]">
            <div className="h-1 w-[127px] rounded bg-[#ececef]"><div className="h-full w-[60px] rounded bg-[#6a45cc]" /></div>42%
          </div>
        </div>
        <EllipsisVertical className="ml-[49px] size-6 text-[#52525b]" />
      </div>
      <div className="mt-[50px] h-7 text-xl leading-7 font-medium text-[#3f3f46]">Screenplay Library</div>
      <div className="mt-2 h-6 text-base leading-6 text-[#85858f]">View your previously uploaded scripts and their certification status.</div>
      <div className="mt-6 flex h-[208px] flex-col items-center rounded-lg border border-[#ececef] bg-white pt-[64px] shadow">
        <CircleSlash2 className="size-10 -scale-x-100 text-[#2a0094]" />
        <div className="mt-[18px] text-base leading-6 text-[#85858f]">You have not uploaded any scripts yet.</div>
      </div>
    </div>
  </div>
);

const DraftMenu = () => (
  <div className="flex items-start gap-[33px]">
    <div className="h-[93px] w-[141px] rounded-lg border border-[#ececef] bg-white pt-[14px] pl-[18px] text-sm font-medium shadow">
      <div className="flex h-7 items-center gap-2.5 text-[#52525b]"><SquarePen className="size-4" />Edit Draft</div>
      <div className="mt-[9px] flex h-7 items-center gap-2.5 text-[#ee4d4d]"><Trash2 className="size-4" />Delete Draft</div>
    </div>
    <div className="flex h-[58px] w-[243px] items-center rounded-lg border border-[#ececef] bg-white pl-2.5">
      <div className="flex h-[37px] w-[36px] items-center justify-center rounded bg-[#f4f4f6]"><File className="size-6 text-[#71717a]" /></div>
      <div className="ml-3.5">
        <div className="text-sm leading-5 font-medium text-[#52525b]">Untitled Draft</div>
        <div className="mt-0.5 text-xs leading-5 text-[#85858f]">Modified 6/20/25</div>
      </div>
      <EllipsisVertical className="ml-auto size-5 text-[#85858f]" />
    </div>
  </div>
);

/* ---------- free canvas ---------- */

const Node = ({ at, children }) => <div className={"absolute " + at}>{children}</div>;

export default function App() {
  return (
    <div className="h-[1367px] w-[4096px] overflow-hidden bg-white font-['Inter',sans-serif] [text-rendering:geometricPrecision]">
      <div className="relative h-[6136px] w-[18380px] origin-top-left scale-[0.222851]">
        <Node at="left-0 top-[833px]"><AnalyzerFirst /></Node>
        <Node at="left-[1540px] top-[833px]"><AnalyzerUploading /></Node>
        <Node at="left-[3080px] top-[833px]"><AnalyzerThird /></Node>

        <Node at="left-[6801px] top-0"><ProjectPanel /></Node>
        <Node at="left-[7698px] top-[456px]"><ToolPanel /></Node>
        <Node at="left-[8595px] top-[456px]"><ShortPanel /></Node>
        <Node at="left-[8595px] top-[1395px]"><div className="w-[617px]"><ProjectForm back /></div></Node>

        <Node at="left-0 top-[2067px]"><AnalyzerQuestions /></Node>
        <Node at="left-[1540px] top-[2067px]"><Dimmed><Modal><ProjectModal /></Modal></Dimmed></Node>
        <Node at="left-[3080px] top-[2067px]"><Dimmed><Modal><WritingModal /></Modal></Dimmed></Node>
        <Node at="left-[4620px] top-[2067px]"><Dimmed><Modal><ToolModal /></Modal></Dimmed></Node>
        <Node at="left-[6160px] top-[2067px]"><Dimmed /></Node>

        <Node at="left-0 top-[3302px]"><Welcome /></Node>
        <Node at="left-[1540px] top-[3302px]"><StepProject /></Node>
        <Node at="left-[3374px] top-[3176px]"><DraftMenu /></Node>
        <Node at="left-[3080px] top-[3302px]"><DraftsHome /></Node>
        <Node at="left-[4620px] top-[3302px]"><StepWriting /></Node>
        <Node at="left-[6160px] top-[3302px]"><StepTools /></Node>
        <Node at="left-[7700px] top-[3302px]"><StepCreative /></Node>
        <Node at="left-[9240px] top-[3302px]"><StepCollab /></Node>
        <Node at="left-[10780px] top-[3302px]"><StepVerify /></Node>
        <Node at="left-[11018px] top-[4434px]"><VerifyLoose /></Node>
        <Node at="left-[12320px] top-[3302px]"><StepStatement /></Node>
        <Node at="left-[13860px] top-[3302px]"><StepDeclare /></Node>
        <Node at="left-[15400px] top-[3302px]"><Submitted /></Node>
        <Node at="left-[16940px] top-[3302px]"><Complete /></Node>
      </div>
    </div>
  );
}
